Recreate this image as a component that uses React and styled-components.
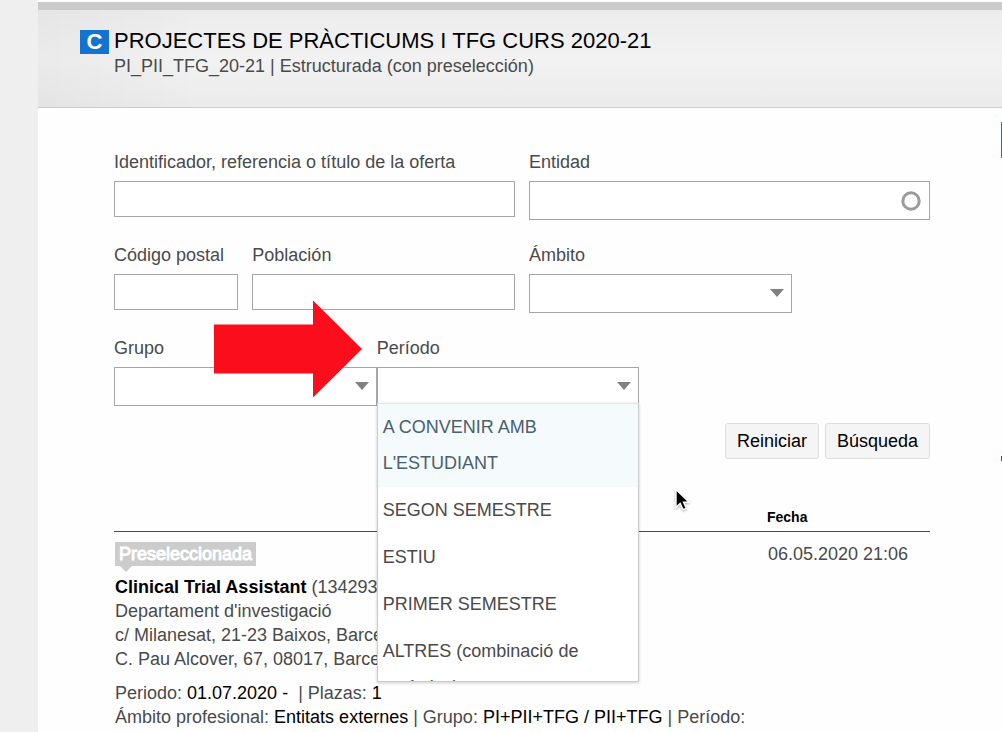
import { useState } from "react";
import styled, { createGlobalStyle } from "styled-components";

const GlobalStyle = createGlobalStyle`
  *, *::before, *::after {
    box-sizing: border-box;
  }
  body {
    margin: 0;
    background: #efefef;
    color: #4a4a4a;
    font-family: "Liberation Sans", Arial, Helvetica, sans-serif;
    font-size: 18px;
    line-height: 24px;
  }
  input, select, button {
    font: inherit;
    color: inherit;
  }
`;

const Page = styled.div`
  position: relative;
  min-height: 100vh;
  margin-left: 38px;
  padding-top: 2px;
  background: #fefefe;
  overflow-x: hidden;
`;

const Header = styled.header`
  display: flex;
  align-items: flex-start;
  gap: 5px;
  height: 106px;
  padding: 18px 42px 0;
  border-top: 8px solid #cacaca;
  border-bottom: 1px solid #cbcbcb;
  background:
    linear-gradient(to right, rgba(0, 0, 0, 0.03), transparent 160px),
    linear-gradient(#ececec, #f2f2f2 50%, #ebebeb);
`;

const Badge = styled.span`
  width: 29px;
  height: 24px;
  margin-top: 2px;
  background: #1373d1;
  color: #fff;
  font-size: 22px;
  font-weight: bold;
  text-align: center;
`;

const Title = styled.h1`
  margin: 0;
  color: #000;
  font-size: 22px;
  font-weight: normal;
  line-height: 26px;
`;

const Subtitle = styled.p`
  margin: 0;
`;

const Body = styled.div`
  display: flex;
  gap: 71px;
  padding-left: 76px;
`;

const Content = styled.main`
  flex: 1;
  min-width: 0;
  padding-top: 42px;
`;

const Sidebar = styled.aside`
  width: 1px;
  padding-top: 14px;
`;

const Marker = styled.div`
  height: ${({ $height }) => $height}px;
  margin-bottom: 298px;
  background: ${({ $color }) => $color};
`;

const Form = styled.form`
  display: grid;
  grid-template-columns: repeat(6, 1fr);
  gap: 23px 14px;
`;

const Field = styled.div`
  display: flex;
  flex-direction: column;
  gap: 7px;
  grid-column: span ${({ $span }) => $span};
`;

const Pair = styled.div`
  position: relative;
  display: flex;
  grid-column: span 6;

  & > ${Field} {
    width: calc((100% - 70px) / 3 + 14px);
  }
`;

const Control = styled.div`
  position: relative;
  display: flex;
  height: ${({ $tall }) => ($tall ? 39 : 36)}px;
`;

const TextInput = styled.input`
  width: 100%;
  padding: 0 5px;
  border: 1px solid #a6a6a6;
  border-radius: 0;
  background: #fff;
  outline: none;
`;

const SelectInput = styled.select`
  width: 100%;
  padding: 0 5px;
  border: 1px solid #a6a6a6;
  border-radius: 0;
  background: #fff;
  appearance: none;
  outline: none;
`;

const Caret = styled.svg`
  position: absolute;
  top: 15px;
  right: 8px;
  pointer-events: none;
`;

const Ring = styled.svg`
  position: absolute;
  top: 10px;
  right: 9px;
  pointer-events: none;
`;

const Options = styled.ul`
  position: absolute;
  top: 36px;
  left: 0;
  right: 0;
  z-index: 2;
  height: 279px;
  margin: 0;
  padding: 0;
  overflow: hidden;
  border: 1px solid #ccc;
  border-top-color: #e2e6e8;
  background: #fff;
  box-shadow: 0 1px 3px rgba(0, 0, 0, 0.2);
  list-style: none;
`;

const Option = styled.li`
  padding: 5px 5px 6px;
  line-height: 36px;
  color: ${({ $active }) => ($active ? "#4b5f6d" : "#4a4a4a")};
  background: ${({ $active }) => ($active ? "#f5fafd" : "#fff")};
`;

const RedArrow = styled.svg`
  position: absolute;
  top: -36px;
  left: 100px;
  z-index: 1;
`;

const Actions = styled.div`
  display: flex;
  justify-content: flex-end;
  gap: 6px;
  grid-column: span 6;
  margin-top: -6px;
`;

const Button = styled.button`
  height: 36px;
  padding: 0 11px;
  border: 1px solid #ddd;
  border-radius: 3px;
  background: #f5f5f5;
  color: #000;
`;

const Offers = styled.table`
  width: 100%;
  margin-top: 46px;
  border-collapse: collapse;

  thead tr {
    border-bottom: 1px solid #4a4a4a;
  }
  th {
    width: 163px;
    padding: 0 0 2px;
    color: #000;
    font-size: 14px;
    text-align: left;
  }
  tbody td {
    padding: 10px 1px 0;
    vertical-align: top;
  }
`;

const Tag = styled.span`
  position: relative;
  display: block;
  width: fit-content;
  margin-bottom: 9px;
  padding: 0 4px;
  background: #ccc;
  color: #fff;
  -webkit-text-stroke: 1px #fff;

  &::after {
    content: "";
    position: absolute;
    top: 100%;
    left: 5px;
    border: 6px solid transparent;
    border-top-color: #ccc;
    border-bottom: 0;
  }
`;

const Line = styled.div`
  margin-top: ${({ $spaced }) => ($spaced ? 10 : 0)}px;

  b, span {
    color: #000;
  }
`;

const Pointer = styled.svg`
  position: absolute;
  top: 488px;
  left: 634px;
  z-index: 3;
  filter: drop-shadow(0 1px 1px rgba(0, 0, 0, 0.3));
`;

const PERIODS = [
  "A CONVENIR AMB L'ESTUDIANT",
  "SEGON SEMESTRE",
  "ESTIU",
  "PRIMER SEMESTRE",
  "ALTRES (combinació de períodes)",
];

function TextField({ id, label, span, tall, children }) {
  return (
    <Field $span={span}>
      <label htmlFor={id}>{label}</label>
      <Control $tall={tall}>
        <TextInput id={id} type="text" />
        {children}
      </Control>
    </Field>
  );
}

function SelectField({ id, label, span, children }) {
  return (
    <Field $span={span}>
      <label htmlFor={id}>{label}</label>
      <Control $tall>
        <SelectInput id={id}>
          <option value="" aria-label="Todos" />
        </SelectInput>
        <Caret width="14" height="8" viewBox="0 0 14 8" aria-hidden="true">
          <path d="M0 0h14L7 8z" fill="#808080" />
        </Caret>
        {children}
      </Control>
    </Field>
  );
}

function PeriodList() {
  const [active, setActive] = useState(0);

  return (
    <Options role="listbox" aria-label="Período">
      {PERIODS.map((period, i) => (
        <Option
          key={period}
          role="option"
          aria-selected={i === active}
          $active={i === active}
          onMouseEnter={() => setActive(i)}
        >
          {period}
        </Option>
      ))}
    </Options>
  );
}

function App() {
  return (
    <Page>
      <GlobalStyle />
      <Header>
        <Badge>C</Badge>
        <div>
          <Title>PROJECTES DE PRÀCTICUMS I TFG CURS 2020-21</Title>
          <Subtitle>PI_PII_TFG_20-21 | Estructurada (con preselección)</Subtitle>
        </div>
      </Header>
      <Body>
        <Content>
          <Form onSubmit={(e) => e.preventDefault()}>
            <TextField id="offer" label="Identificador, referencia o título de la oferta" span={3} />
            <TextField id="entity" label="Entidad" span={3} tall>
              <Ring width="20" height="20" viewBox="0 0 20 20" aria-hidden="true">
                <circle cx="10" cy="10" r="8.2" fill="none" stroke="#9b9b9b" strokeWidth="3" />
              </Ring>
            </TextField>
            <TextField id="zip" label="Código postal" span={1} />
            <TextField id="city" label="Población" span={2} />
            <SelectField id="scope" label="Ámbito" span={2} />
            <Pair>
              <SelectField id="group" label="Grupo" />
              <SelectField id="period" label="Período">
                <PeriodList />
              </SelectField>
              <RedArrow width="148" height="98" viewBox="0 0 148 98" aria-hidden="true">
                <path d="M0 24.5h99V.5L148 49 99 97.5v-24H0z" fill="#fc0d1b" />
              </RedArrow>
            </Pair>
            <Actions>
              <Button type="reset">Reiniciar</Button>
              <Button type="submit">Búsqueda</Button>
            </Actions>
          </Form>
          <Offers>
            <thead>
              <tr>
                <td />
                <th scope="col">Fecha</th>
              </tr>
            </thead>
            <tbody>
              <tr>
                <td>
                  <Tag>Preseleccionada</Tag>
                  <Line><b>Clinical Trial Assistant</b> (134293)</Line>
                  <Line>Departament d'investigació</Line>
                  <Line>c/ Milanesat, 21-23 Baixos, Barcelona</Line>
                  <Line>C. Pau Alcover, 67, 08017, Barcelona</Line>
                  <Line $spaced>
                    Periodo: <span>01.07.2020 - </span>&nbsp;| Plazas: <span>1</span>
                  </Line>
                  <Line>
                    Ámbito profesional: <span>Entitats externes</span> | Grupo:{" "}
                    <span>PI+PII+TFG / PII+TFG</span> | Período:
                  </Line>
                </td>
                <td>06.05.2020 21:06</td>
              </tr>
            </tbody>
          </Offers>
        </Content>
        <Sidebar>
          <Marker $height={36} $color="#1a6fb8" />
          <Marker $height={5} $color="#b01c2e" />
        </Sidebar>
      </Body>
      <Pointer width="18" height="26" viewBox="0 0 18 26" aria-hidden="true">
        <path
          d="M4 1.5v17.8l4.2-3.8 2.9 6.2 3.2-1.4-2.8-6h5.6z"
          fill="#000"
          stroke="#fff"
          strokeWidth="1.4"
        />
      </Pointer>
    </Page>
  );
}

export default App;
